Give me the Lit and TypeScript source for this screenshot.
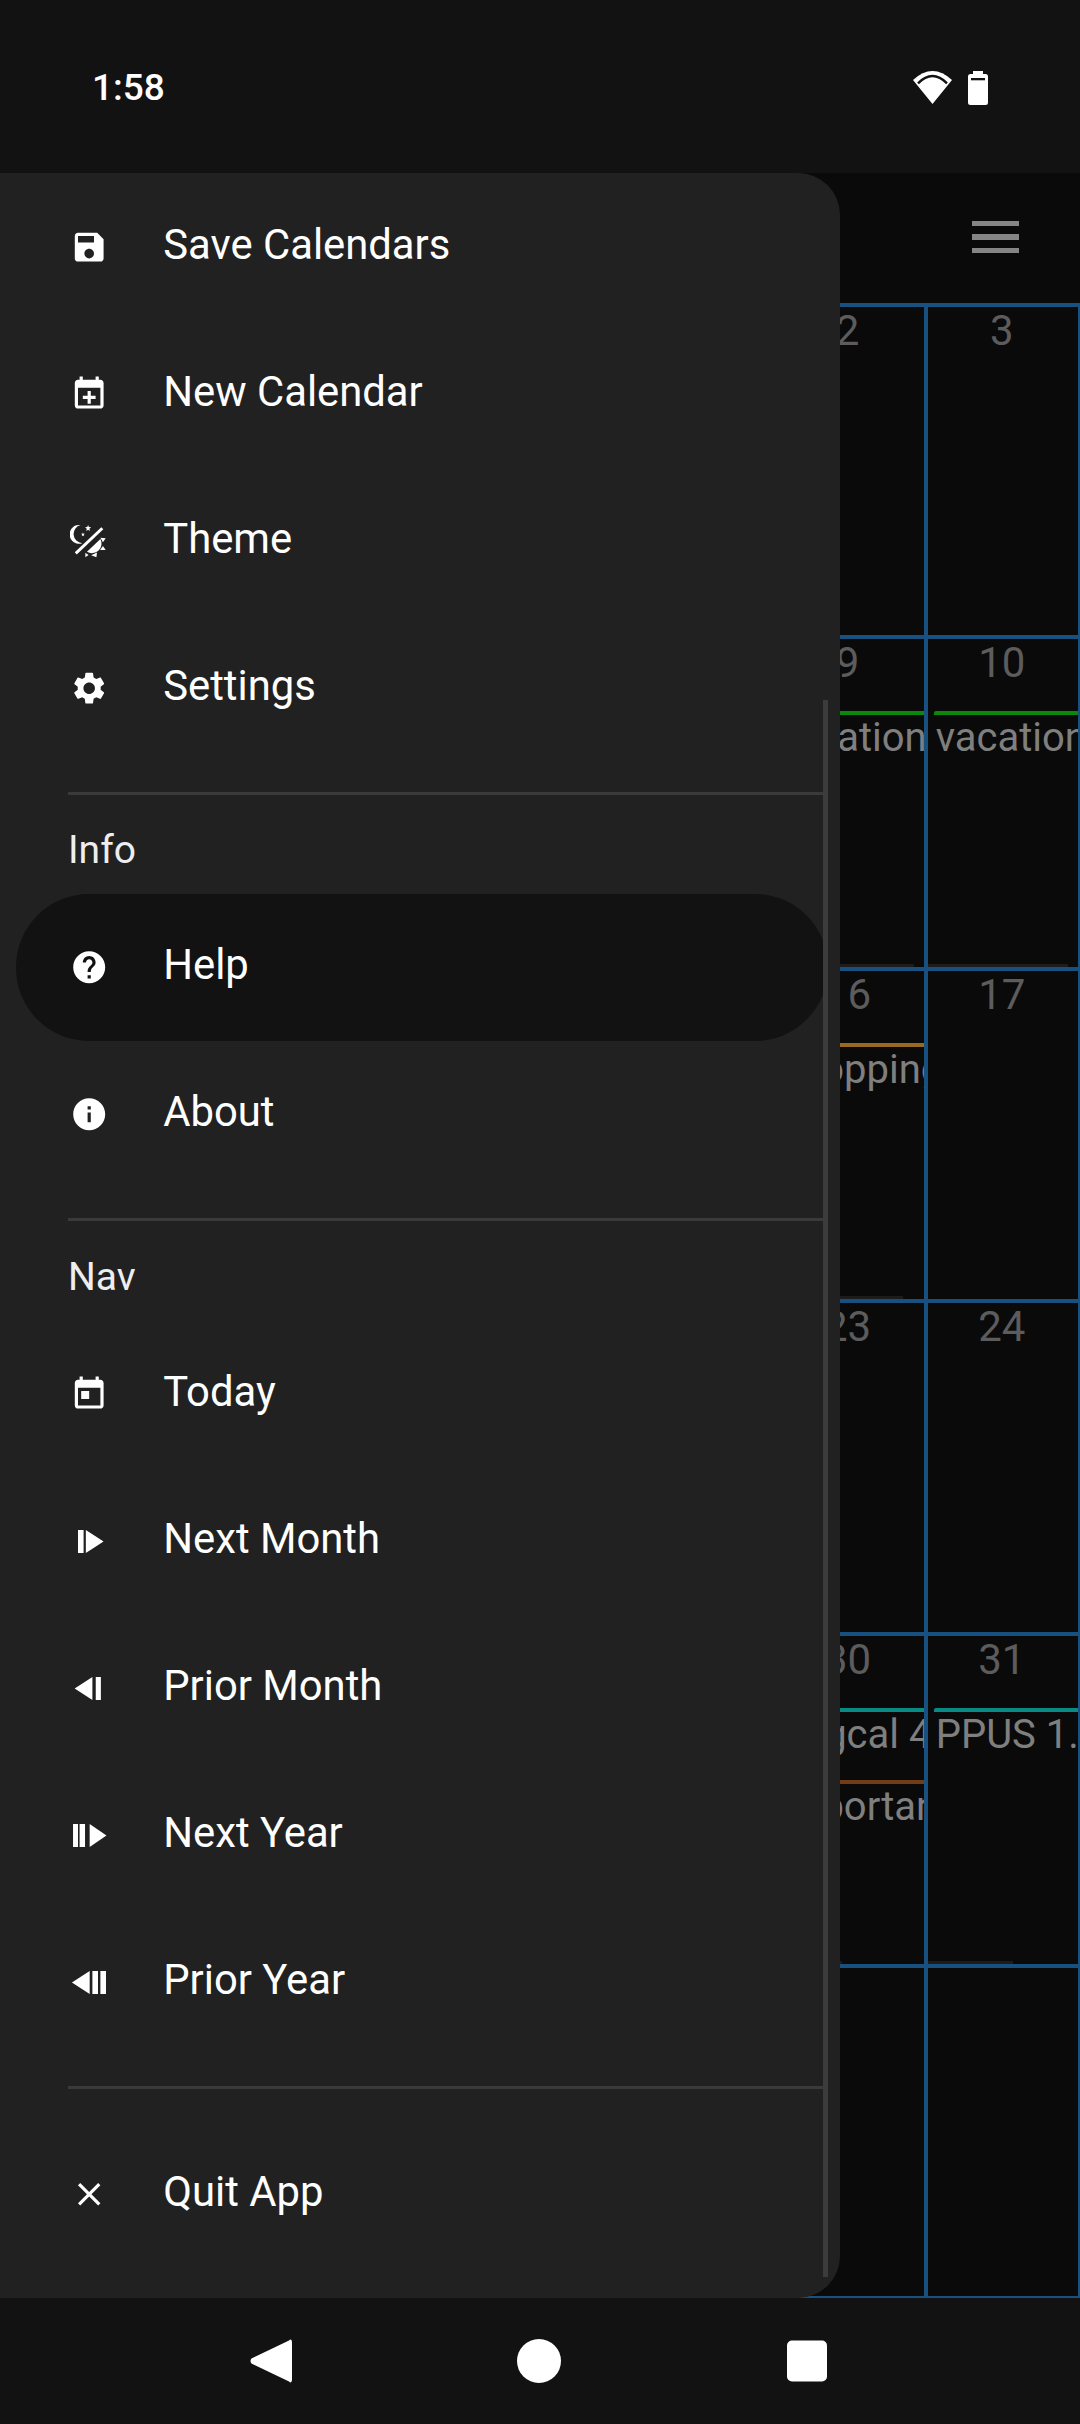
import { LitElement, html, css, svg } from "lit";
import { customElement } from "lit/decorators.js";
import { classMap } from "lit/directives/class-map.js";

const icons: Record<string, any> = {
  save: svg`<path d="M17 3H5c-1.11 0-2 .9-2 2v14c0 1.1.89 2 2 2h14c1.1 0 2-.9 2-2V7l-4-4zm-5 16c-1.66 0-3-1.34-3-3s1.34-3 3-3 3 1.34 3 3-1.34 3-3 3zm3-10H5V5h10v4z"/>`,
  newCal: svg`<path d="M19 3h-1V1h-2v2H8V1H6v2H5c-1.11 0-1.99.9-1.99 2L3 19c0 1.1.89 2 2 2h14c1.1 0 2-.9 2-2V5c0-1.1-.9-2-2-2zm0 16H5V8h14v11z"/><path d="M11 10h2v3h3v2h-3v3h-2v-3H8v-2h3z"/>`,
  theme: svg`
    <path d="M6.6 1.9A5.9 5.9 0 1 0 7.6 13.3 5.8 5.8 0 0 1 6.6 1.9z"/>
    <path d="M11.3 1.9l.5 1.3 1.4.1-1.1.9.4 1.4-1.2-.8-1.2.8.4-1.4-1.1-.9 1.4-.1z"/>
    <path d="M8.1 6.5l.3.8.9.1-.7.6.2.9-.7-.5-.7.5.2-.9-.7-.6.9-.1z"/>
    <path d="M3.6 19.6L20.2 3.9" stroke="#fff" stroke-width="1.8" fill="none"/>
    <path d="M10.6 18.6L19 10.6A6 6 0 0 1 10.6 18.6z"/>
    <path d="M19 9.8L22.3 10.2 20.6 12.7z"/>
    <path d="M20.6 15L22.3 17.5 18.8 17.5z"/>
    <path d="M16.9 19L16.5 22.1 13.2 20.8z"/>
    <path d="M9.6 19.2L11.6 20.7 9.6 22.1z"/>`,
  settings: svg`<path d="M19.14 12.94c.04-.3.06-.61.06-.94 0-.32-.02-.64-.07-.94l2.03-1.58c.18-.14.23-.41.12-.61l-1.92-3.32c-.12-.22-.37-.29-.59-.22l-2.39.96c-.5-.38-1.03-.7-1.62-.94l-.36-2.54c-.04-.24-.24-.41-.48-.41h-3.84c-.24 0-.43.17-.47.41l-.36 2.54c-.59.24-1.13.57-1.62.94l-2.39-.96c-.22-.08-.47 0-.59.22L2.74 8.87c-.12.21-.08.47.12.61l2.03 1.58c-.05.3-.09.63-.09.94s.02.64.07.94l-2.03 1.58c-.18.14-.23.41-.12.61l1.92 3.32c.12.22.37.29.59.22l2.39-.96c.5.38 1.03.7 1.62.94l.36 2.54c.05.24.24.41.48.41h3.84c.24 0 .44-.17.47-.41l.36-2.54c.59-.24 1.13-.56 1.62-.94l2.39.96c.22.08.47 0 .59-.22l1.92-3.32c.12-.22.07-.47-.12-.61l-2.01-1.58zM12 15.6c-1.98 0-3.6-1.62-3.6-3.6s1.62-3.6 3.6-3.6 3.6 1.62 3.6 3.6-1.62 3.6-3.6 3.6z"/>`,
  help: svg`<path d="M12 2C6.48 2 2 6.48 2 12s4.48 10 10 10 10-4.48 10-10S17.52 2 12 2zm1 17h-2v-2h2v2zm2.07-7.75l-.9.92C13.45 12.9 13 13.5 13 15h-2v-.5c0-1.1.45-2.1 1.17-2.83l1.24-1.26c.37-.36.59-.86.59-1.41 0-1.1-.9-2-2-2s-2 .9-2 2H8c0-2.21 1.79-4 4-4s4 1.79 4 4c0 .88-.36 1.68-.93 2.25z"/>`,
  info: svg`<path d="M12 2C6.48 2 2 6.48 2 12s4.48 10 10 10 10-4.48 10-10S17.52 2 12 2zm1 15h-2v-6h2v6zm0-8h-2V7h2v2z"/>`,
  today: svg`<path d="M19 3h-1V1h-2v2H8V1H6v2H5c-1.11 0-1.99.9-1.99 2L3 19c0 1.1.89 2 2 2h14c1.1 0 2-.9 2-2V5c0-1.1-.9-2-2-2zm0 16H5V8h14v11zM7 10h5v5H7z"/>`,
  nextMonth: svg`<path d="M5 5h3.5v14.4H5zM9.9 5L21 12.2 9.9 19.4z"/>`,
  priorMonth: svg`<path d="M14 5v14.4L2.9 12.2zM16.1 5h3.2v14.4h-3.2z"/>`,
  nextYear: svg`<path d="M1.9 5H5v14.4H1.9zM6 5h3.4v14.4H6zM12.3 5l10.5 7.2-10.5 7.2z"/>`,
  priorYear: svg`<path d="M12.3 5v14.4L1.2 12.2zM14 5h3.5v14.4H14zM19 5h3.5v14.4H19z"/>`,
  close: svg`<path d="M19 6.41L17.59 5 12 10.59 6.41 5 5 6.41 10.59 12 5 17.59 6.41 19 12 13.41 17.59 19 19 17.59 13.41 12z"/>`,
};

type MenuEntry =
  | { icon: string; text: string; active?: boolean }
  | { divider: true }
  | { label: string; tall?: boolean };

const menu: MenuEntry[] = [
  { icon: "save", text: "Save Calendars" },
  { icon: "newCal", text: "New Calendar" },
  { icon: "theme", text: "Theme" },
  { icon: "settings", text: "Settings" },
  { divider: true },
  { label: "Info" },
  { icon: "help", text: "Help", active: true },
  { icon: "info", text: "About" },
  { divider: true },
  { label: "Nav", tall: true },
  { icon: "today", text: "Today" },
  { icon: "nextMonth", text: "Next Month" },
  { icon: "priorMonth", text: "Prior Month" },
  { icon: "nextYear", text: "Next Year" },
  { icon: "priorYear", text: "Prior Year" },
  { divider: true },
  { icon: "close", text: "Quit App" },
];

// day -> events shown in the cell, scroll = width of the faint cell scrollbar
const dayData: Record<number, { events: { text: string; color: string; start?: boolean }[]; scroll?: number }> = {
  9: { events: [{ text: "vacation", color: "#0a880a" }], scroll: 141 },
  10: { events: [{ text: "vacation", color: "#0a880a", start: true }], scroll: 140 },
  16: { events: [{ text: "Shopping", color: "#9a6820" }], scroll: 130 },
  30: {
    events: [
      { text: "Pr gcal 4", color: "#0a8a85" },
      { text: "Important", color: "#743c16" },
    ],
    scroll: 69,
  },
  31: { events: [{ text: "PPUS 1.1", color: "#0a8a85", start: true }], scroll: 85 },
};

@customElement("app-root")
export class AppRoot extends LitElement {
  static styles = css`
    :host {
      display: block;
      font-family: Roboto, sans-serif;
    }

    .screen {
      width: 1080px;
      height: 2424px;
      display: flex;
      flex-direction: column;
      background: #0a0a0a;
    }

    .status {
      height: 173px;
      flex: none;
      background: #121212;
      color: #fff;
      display: flex;
      align-items: flex-start;
      justify-content: space-between;
      padding: 71px 92px 0 92px;
      box-sizing: border-box;
    }

    .time {
      font-size: 37px;
      font-weight: 500;
      line-height: 34px;
    }

    .status-icons {
      display: flex;
      gap: 16px;
    }

    .main {
      flex: 1;
      position: relative;
      overflow: hidden;
      display: flex;
      flex-direction: column;
    }

    .toolbar {
      height: 130px;
      flex: none;
      display: flex;
      flex-direction: column;
      align-items: flex-end;
      gap: 8px;
      padding: 48px 61px 0 0;
      box-sizing: border-box;
    }

    .toolbar span {
      width: 47px;
      height: 5.3px;
      background: #858585;
    }

    .grid {
      flex: 1;
      display: grid;
      grid-template-columns: repeat(7, 1fr);
      grid-template-rows: repeat(6, 1fr);
      border-top: 2px solid #185080;
      min-height: 0;
    }

    .cell {
      border: 2px solid #185080;
      display: flex;
      flex-direction: column;
      overflow: hidden;
      min-width: 0;
      min-height: 0;
    }

    .day {
      font-size: 42px;
      line-height: 42px;
      padding: 3px 2px 0 0;
      margin-bottom: 27px;
      text-align: center;
      color: #5c5c5c;
    }

    .event {
      height: 72px;
      flex: none;
      box-sizing: border-box;
      border-top: 4px solid;
      padding-left: 2px;
      font-size: 40px;
      line-height: 46px;
      color: #7f7f7f;
      white-space: nowrap;
      overflow: hidden;
    }

    .event.start {
      margin-left: 6px;
      border-top-left-radius: 2px;
    }

    .cell-scroll {
      margin-top: auto;
      height: 3px;
      flex: none;
      background: #1c1c1c;
    }

    .drawer {
      position: absolute;
      left: 0;
      top: 0;
      bottom: 0;
      width: 840px;
      padding-top: 1px;
      box-sizing: border-box;
      background: #212121;
      border-radius: 0 42px 42px 0;
      color: #fff;
      overflow: hidden;
    }

    .scrollbar {
      position: absolute;
      left: 823px;
      top: 527px;
      width: 5px;
      height: 1577px;
      background: #3c3c3c;
    }

    .item {
      height: 147px;
      display: flex;
      align-items: center;
      margin: 0 12px 0 16px;
      padding-left: 54.3px;
      border-radius: 73px;
      font-size: 41.8px;
    }

    .item.active {
      background: #121212;
    }

    .item svg {
      width: 38.4px;
      height: 38.4px;
      fill: #fff;
      flex: none;
      margin-right: 54.5px;
    }

    .item span {
      position: relative;
      top: -3px;
    }

    .divider {
      height: 3px;
      margin: 30px 12px 0 68px;
      background: #3a3a3a;
    }

    .divider.last {
      margin-bottom: 32px;
    }

    .label {
      height: 98.5px;
      box-sizing: border-box;
      padding: 33px 0 0 68px;
      font-size: 39px;
      line-height: 44px;
      color: #eee;
    }

    .label.tall {
      height: 100px;
      padding-top: 34px;
    }

    .nav {
      height: 126px;
      flex: none;
      background: #121212;
      display: flex;
      align-items: center;
      justify-content: center;
      gap: 224px;
      padding: 0 2px 0 0;
      box-sizing: border-box;
    }

    .nav svg {
      width: 44px;
      height: 44px;
      fill: #fff;
    }
  `;

  private renderEntry(entry: MenuEntry, index: number) {
    if ("divider" in entry) {
      return html`<div class=${classMap({ divider: true, last: index === menu.length - 2 })}></div>`;
    }
    if ("label" in entry) {
      return html`<div class=${classMap({ label: true, tall: !!entry.tall })}>${entry.label}</div>`;
    }
    return html`
      <div class=${classMap({ item: true, active: !!entry.active })}>
        <svg viewBox="0 0 24 24">${icons[entry.icon]}</svg>
        <span>${entry.text}</span>
      </div>
    `;
  }

  private renderCell(index: number) {
    const day = index - 3;
    // the first five columns sit fully behind the drawer, only their borders matter
    if (day < 1 || day > 31 || index % 7 < 5) return html`<div class="cell"></div>`;
    const data = dayData[day];
    return html`
      <div class="cell">
        <div class="day">${day}</div>
        ${data?.events.map(
          (e) => html`<div class=${classMap({ event: true, start: !!e.start })} style="border-top-color:${e.color}">${e.text}</div>`
        )}
        ${data?.scroll ? html`<div class="cell-scroll" style="width:${data.scroll}px"></div>` : ""}
      </div>
    `;
  }

  render() {
    return html`
      <div class="screen">
        <div class="status">
          <div class="time">1:58</div>
          <div class="status-icons">
            <svg width="39" height="34" viewBox="0 0 39 34">
              <path d="M0 9Q19.5 -9 39 9L19.5 33z" fill="#fff" />
              <path d="M5 12.3Q19.5 -2.3 34 12.3" fill="none" stroke="#121212" stroke-width="2.4" />
            </svg>
            <svg width="20" height="34" viewBox="0 0 20 34">
              <path d="M5 0h10v3h2.5A2.5 2.5 0 0 1 20 5.5V31.5A2.5 2.5 0 0 1 17.5 34H2.5A2.5 2.5 0 0 1 0 31.5V5.5A2.5 2.5 0 0 1 2.5 3H5z" fill="#fff" />
              <rect x="3" y="7" width="14" height="2.3" fill="#121212" />
            </svg>
          </div>
        </div>

        <div class="main">
          <div class="toolbar"><span></span><span></span><span></span></div>
          <div class="grid">
            ${Array.from({ length: 42 }, (_, i) => this.renderCell(i))}
          </div>

          <div class="drawer">
            ${menu.map((entry, i) => this.renderEntry(entry, i))}
            <div class="scrollbar"></div>
          </div>
        </div>

        <div class="nav">
          <svg viewBox="0 0 44 44">
            <path d="M40 1.5Q42.5 -1 43 3V41Q42.5 45 40 42.5L2.5 24.5Q0.5 22 2.5 19.5z" />
          </svg>
          <svg viewBox="0 0 44 44"><circle cx="22" cy="22" r="22" /></svg>
          <svg viewBox="0 0 44 44"><rect x="2" y="1.5" width="40" height="41" rx="5" /></svg>
        </div>
      </div>
    `;
  }
}
